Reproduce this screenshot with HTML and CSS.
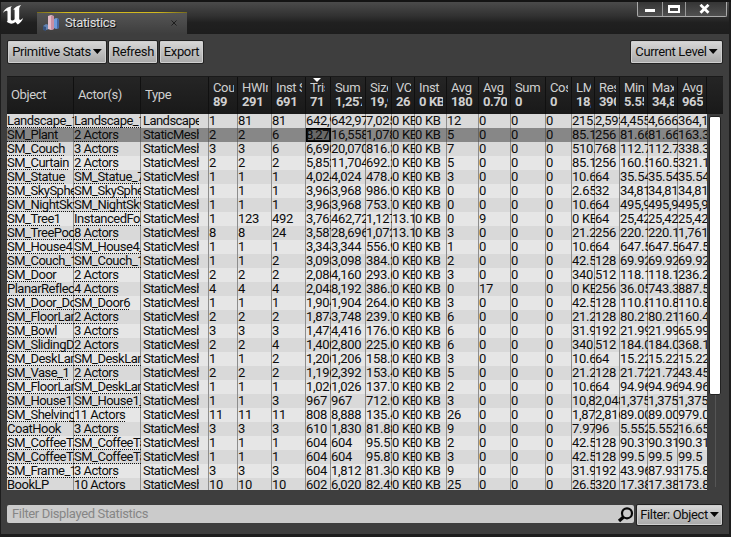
FILE: index.html
```html
<!DOCTYPE html>
<html lang="en">
<head>
<meta charset="utf-8">
<title>Statistics</title>
<link rel="stylesheet" href="styles.css">
</head>
<body>
<div class="window">
  <header class="titlebar">
    <svg class="logo" width="24" height="21" viewBox="0 0 24 21"><path fill="#fff" d="M1 8C2.500 4 6 1.500 10 1.200 8.500 2.200 8.800 3.200 8.800 5V14.500C9.200 15.800 11 16 12.600 14.300V5.500C12.600 4.300 11.900 4.200 11 4.700 12.800 2.500 15 .8 19.200 0 17.500 1.600 17.200 2.800 17.200 4.500V13.500C17.300 15.600 19 15.300 21.200 12.800 20.300 16 18.100 18.100 15.800 19.500L13.300 17.100C10.900 19.200 7.700 19.300 4.600 16.600 5.600 16.500 5.500 15.600 5.500 14.500V7C5.500 5 3.400 5.200 1 8Z"/></svg>
    <div class="tab">
      <svg width="17" height="16" viewBox="0 0 17 16"><path fill="#6384b4" d="M0 11l3-2 3 1v4l-3 1-3-1z"/><path fill="#39527c" d="M0 11l3 1v4l-3-1z"/><path fill="#e3bcc8" d="M5 1l3-1 3 1v13l-3 1-3-1z"/><path fill="#c98fa2" d="M8 1l3 0v13l-3 1z"/><path fill="#6e9bda" d="M11 4l2-1 3 1v9l-3 1-2-1z"/><path fill="#4668a4" d="M14 4h2v9l-2 1z"/></svg>
      <span class="tab-name">Statistics</span>
      <svg class="tab-close" width="6" height="6" viewBox="0 0 6 6"><path d="M.5.5l5 5M5.500.5l-5 5" stroke="#1d1d1d"/></svg>
    </div>
    <div class="controls">
      <span class="ctl"><svg width="12" height="10"><path d="M1 6.500h10" stroke="#fff" stroke-width="3"/></svg></span>
      <span class="ctl ctl-mid"><svg width="12" height="10"><path fill="#fff" fill-rule="evenodd" d="M0 1h12v8H0zM2 4v3h8V4z"/></svg></span>
      <span class="ctl ctl-close"><svg width="12" height="10"><path d="M1.500.8l8 8M9.500.8l-8 8" stroke="#fff" stroke-width="2.800"/></svg></span>
    </div>
  </header>
  <main class="panel">
    <div class="toolbar">
      <button class="btn primitive">Primitive Stats<i class="caret"></i></button>
      <button class="btn refresh">Refresh</button>
      <button class="btn export">Export</button>
      <button class="btn level">Current Level<i class="caret"></i></button>
    </div>
    <section class="table">
      <div class="head grid" id="head"></div>
      <div class="body">
        <div class="rows" id="rows"></div>
        <div class="scroll"><div class="thumb"></div><div class="track"></div></div>
      </div>
    </section>
    <footer class="footer">
      <div class="search"><span>Filter Displayed Statistics</span>
        <svg width="17" height="17" viewBox="0 0 17 17"><circle cx="10" cy="7.300" r="5" fill="none" stroke="#080808" stroke-width="2.200"/><path d="M6.500 11L2 15" stroke="#080808" stroke-width="3.200"/></svg>
      </div>
      <button class="btn filter">Filter: Object<i class="caret"></i></button>
    </footer>
  </main>
</div>
<script src="app.js"></script>
</body>
</html>
```
FILE: styles.css
```css
* { box-sizing: border-box; }
body { margin: 0; font: 13px/14px Roboto, "Liberation Sans", sans-serif; letter-spacing: -.36px; color: #0c0c0c; }
.window { width: 731px; height: 537px; background: #1d1d1d; border-top: 2px solid #141414; padding: 0 2px 3px 1px; display: flex; flex-direction: column; overflow: hidden; }
.titlebar { height: 32px; flex: none; display: flex; align-items: flex-start; background: linear-gradient(#4b4b4b, #303030 45%, #202020 65%, #1d1d1d); }
.logo { margin: 3px 0 0 1px; }
.tab { width: 150px; height: 22px; margin: 10px 0 0 11px; padding: 0 10px 0 6px; display: flex; align-items: center; background: linear-gradient(90deg, #776b1c, #d2b91e 20%, #d2b91e 80%, #776b1c) top / 100% 1px no-repeat, linear-gradient(#565656, #3e3e3e); color: #e0e0e0; text-shadow: 1px 1px #111; }
.tab-name { margin-left: 5px; }
.tab-close { margin-left: auto; }
.controls { display: flex; margin-left: auto; margin-right: 2px; height: 15px; border: 1px solid #aaa; border-top: 0; border-radius: 0 0 2px 2px; background: linear-gradient(#353535, #505050); }
.ctl { width: 24px; display: flex; align-items: center; justify-content: center; }
.ctl-mid { border: solid #999; border-width: 0 1px; }
.ctl-close { width: 40px; padding-right: 2px; }
.panel { flex: 1; background: #3e3e3e; padding: 6px 6px 0; display: flex; flex-direction: column; }
.toolbar { display: flex; gap: 1px; height: 24px; }
.btn { height: 24px; padding: 0 0 1px; border: 1px solid #222; border-radius: 2px; background: linear-gradient(#d8d8d8, #a8a8a8); box-shadow: inset 0 0 0 1px #cfcfcf; font: inherit; letter-spacing: inherit; color: #0c0c0c; display: flex; align-items: center; justify-content: center; gap: 2px; white-space: nowrap; }
.primitive { width: 100px; }
.refresh { width: 50px; }
.export { width: 45px; }
.level { width: 93px; margin-left: auto; }
.caret { flex: none; width: 9px; height: 5px; background: #080808; clip-path: polygon(0 0, 100% 0, 50% 100%); }
.table { margin-top: 12px; width: 716px; height: 414px; }
.grid { display: grid; grid-template-columns: 67px 67px 68px 29px 34px 34px 25px 35px 26px 23px 32px 32px 32px 35px 26px 23px 25px 28px 30px 29px; }
.head { height: 38px; background: linear-gradient(#252525, #191919); color: #d0d0d0; border-top: 1px solid #1a1a1a; }
.hcell { position: relative; padding: 4px 3px 0 4px; border-right: 1px solid #101010; white-space: nowrap; overflow: hidden; }
.hcell div { overflow: hidden; }
.hcell .total { font-weight: bold; }
.hcell.plain { padding-top: 11px; }
.hcell.sorted { padding-right: 5px; }
.hcell.sorted::before { content: ""; position: absolute; left: 7px; top: 1px; width: 8px; height: 4px; background: #fff; clip-path: polygon(0 0, 100% 0, 50% 100%); }
.body { display: flex; height: 376px; }
.rows { width: 700px; overflow: hidden; }
.row { height: 14px; background: #e6e6e6; }
.row:nth-child(odd) { background: #d9d9d9; }
.row.selected { background: #878787; }
.cell { height: 14px; background: linear-gradient(#8d8d8d, #8d8d8d) right / 1px 100% no-repeat; white-space: nowrap; overflow: hidden; }
.row .cell:last-child { background: none; }
.selected .cell { background-image: linear-gradient(#666, #666); }
.cell span { display: inline-block; height: 14px; vertical-align: top; }
.cell.link { letter-spacing: -.5px; }
.cell.link span { background: repeating-linear-gradient(90deg, #111 0 1px, transparent 1px 2px) bottom / 100% 1px no-repeat; }
.cell.type { padding: 0 9px 0 2px; letter-spacing: -.55px; }
.cell.type span { width: 56px; overflow: hidden; }
.cell.num { letter-spacing: -.3px; }
.selected .cell.focus { border: 1px solid #000; box-shadow: inset 0 0 0 1px #111; background: #686868; }
.cell.focus span { margin: -1px 0 0 -1px; }
.scroll { width: 16px; padding: 2px 0 0 2px; display: flex; flex-direction: column; }
.thumb { width: 12px; height: 279px; background: #fff; border: 1px solid #222; border-radius: 2px; }
.track { width: 1px; height: 92px; margin-left: 6px; background: #555; }
.footer { display: flex; margin-top: 14px; gap: 2px; }
.search { width: 628px; height: 18px; margin-top: 1px; background: #cbcbcb; border-radius: 2px; display: flex; align-items: center; justify-content: space-between; padding: 0 0 0 5px; color: #868686; }
.filter { width: 87px; height: 22px; }
```
FILE: app.js
```js
const heads = [
  ["Object"], ["Actor(s)"], ["Type"], ["Count", "89"], ["HWInst", "291"], ["Inst Sections", "691"],
  ["Tris", "711,000"], ["Sum", "1,257,000"], ["Size", "19,900"], ["VC", "26"], ["Inst", "0 KB"],
  ["Avg", "180"], ["Avg", "0.70"], ["Sum", "0"], ["Cost", "0"], ["LM", "18,900"], ["Res", "39000"],
  ["Min", "5.552"], ["Max", "34,816"], ["Avg", "965"]
];
const data = `Landscape_1|Landscape_1|Landscape|1|81|81|642,9|642,977|7,025|0 KB|0 KB|12|0|0|0|215.|2,592|4,455|4,666|364,1
SM_Plant|2 Actors|StaticMesh|2|2|6|8,279|16,558|1,078|0 KB|0 KB|5|0|0|0|85.1|256|81.66|81.66|163.3
SM_Couch|3 Actors|StaticMesh|3|3|6|6,690|20,070|816.3|0 KB|0 KB|7|0|0|0|510.|768|112.7|112.7|338.3
SM_Curtain|2 Actors|StaticMesh|2|2|2|5,852|11,704|692.2|0 KB|0 KB|5|0|0|0|85.1|256|160.5|160.5|321.1
SM_Statue|SM_Statue_7|StaticMesh|1|1|1|4,024|4,024|478.4|0 KB|0 KB|3|0|0|0|10.6|64|35.54|35.54|35.54
SM_SkySphere|SM_SkySphere|StaticMesh|1|1|1|3,968|3,968|986.9|0 KB|0 KB|0|0|0|0|2.65|32|34,81|34,81|34,81
SM_NightSky|SM_NightSky|StaticMesh|1|1|1|3,968|3,968|753.7|0 KB|0 KB|0|0|0|0|10.6|64|495,9|495,9|495,9
SM_Tree1|InstancedFoliage|StaticMesh|1|123|492|3,762|462,72|1,127|13.1|0 KB|0|9|0|0|0 KB|64|25,42|25,42|25,42
SM_TreePool|8 Actors|StaticMesh|8|8|24|3,587|28,696|1,072|13.1|0 KB|3|0|0|0|21.2|256|220.1|220.1|1,761
SM_House4|SM_House4_2|StaticMesh|1|1|1|3,344|3,344|556.9|0 KB|0 KB|1|0|0|0|10.6|64|647.5|647.5|647.5
SM_Couch_1|SM_Couch_1|StaticMesh|1|1|2|3,098|3,098|384.2|0 KB|0 KB|2|0|0|0|42.5|128|69.92|69.92|69.92
SM_Door|2 Actors|StaticMesh|2|2|2|2,080|4,160|293.6|0 KB|0 KB|3|0|0|0|340.|512|118.1|118.1|236.2
PlanarReflection|4 Actors|StaticMesh|4|4|4|2,048|8,192|386.2|0 KB|0 KB|0|17|0|0|0 KB|256|36.05|743.3|887.5
SM_Door_Door|SM_Door6|StaticMesh|1|1|1|1,904|1,904|264.0|0 KB|0 KB|3|0|0|0|42.5|128|110.8|110.8|110.8
SM_FloorLamp|2 Actors|StaticMesh|2|2|2|1,874|3,748|239.7|0 KB|0 KB|6|0|0|0|21.2|128|80.21|80.21|160.4
SM_Bowl|3 Actors|StaticMesh|3|3|3|1,472|4,416|176.9|0 KB|0 KB|6|0|0|0|31.9|192|21.99|21.99|65.99
SM_SlidingDoor|2 Actors|StaticMesh|2|2|4|1,400|2,800|225.0|0 KB|0 KB|6|0|0|0|340.|512|184.0|184.0|368.1
SM_DeskLamp|SM_DeskLamp|StaticMesh|1|1|2|1,206|1,206|158.3|0 KB|0 KB|3|0|0|0|10.6|64|15.22|15.22|15.22
SM_Vase_1|2 Actors|StaticMesh|2|2|2|1,196|2,392|153.4|0 KB|0 KB|5|0|0|0|21.2|128|21.72|21.72|43.45
SM_FloorLamp|SM_DeskLamp|StaticMesh|1|1|1|1,026|1,026|137.7|0 KB|0 KB|2|0|0|0|10.6|64|94.96|94.96|94.96
SM_House1|SM_House1_2|StaticMesh|1|1|3|967|967|712.9|0 KB|0 KB|3|0|0|0|10,8|2,048|1,375|1,375|1,375
SM_Shelving|11 Actors|StaticMesh|11|11|11|808|8,888|135.4|0 KB|0 KB|26|0|0|0|1,87|2,816|89.00|89.00|979.0
CoatHook|3 Actors|StaticMesh|3|3|3|610|1,830|81.88|0 KB|0 KB|9|0|0|0|7.97|96|5.552|5.552|16.65
SM_CoffeeTable|SM_CoffeeTable|StaticMesh|1|1|1|604|604|95.57|0 KB|0 KB|2|0|0|0|42.5|128|90.31|90.31|90.31
SM_CoffeeTable|SM_CoffeeTable|StaticMesh|1|1|1|604|604|95.87|0 KB|0 KB|3|0|0|0|42.5|128|99.5|99.5|99.5
SM_Frame_1|3 Actors|StaticMesh|3|3|3|604|1,812|81.34|0 KB|0 KB|9|0|0|0|31.9|192|43.96|87.93|175.8
BookLP|10 Actors|StaticMesh|10|10|10|602|6,020|82.49|0 KB|0 KB|25|0|0|0|26.5|320|17.38|17.38|173.8`;

document.getElementById("head").innerHTML = heads.map(([name, total], i) =>
  `<div class="hcell${total ? "" : " plain"}${i === 6 ? " sorted" : ""}"><div>${name}</div>${total ? `<div class="total">${total}</div>` : ""}</div>`
).join("");

document.getElementById("rows").innerHTML = data.split("\n").map((line, r) =>
  `<div class="row grid${r === 1 ? " selected" : ""}">` + line.split("|").map((text, c) => {
    const kind = c < 2 ? "link" : c === 2 ? "type" : "num";
    return `<div class="cell ${kind}${r === 1 && c === 6 ? " focus" : ""}"><span>${text}</span></div>`;
  }).join("") + "</div>"
).join("");
```
